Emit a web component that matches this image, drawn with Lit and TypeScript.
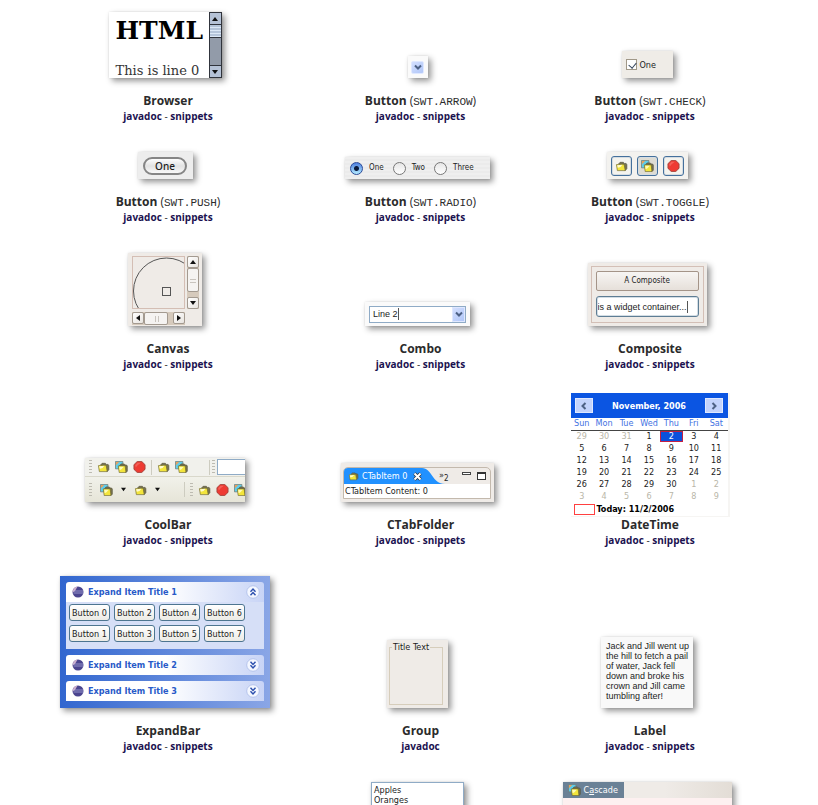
import { LitElement, html, svg, css, TemplateResult } from "lit";
import { customElement } from "lit/decorators.js";

interface Widget {
  name: string;
  style?: string;
  snippets: boolean;
  picture: TemplateResult;
  flush?: boolean;
}

const folder = svg`
  <path d="M4 4 L5.500 2.500 H9 L10 3.700 H12 L12.800 5 V9.500 L11 11.500 Z" fill="#77734e" stroke="#55533c" stroke-width=".7"/>
  <path d="M1.500 5 L9.800 4.500 L11 11.500 H2.500 Z" fill="#f3e53c" stroke="#6d6730" stroke-width=".7"/>
  <path d="M2.300 5.700 L8 5.200 L6 7.500 L3 8.500 Z" fill="#fffbd0"/>`;

const folderIcon = () => html`<svg class="icon" viewBox="0 0 14 13">${folder}</svg>`;

const imageFolderIcon = () => html`<svg class="icon" viewBox="0 0 14 13">
  <path d="M.5 .5 H8.500 V8.500 H.5 Z" fill="#5fcdea" stroke="#6f7a74" stroke-width=".8"/>
  <path d="M1 1 H4.500 L1 4.500 Z" fill="#e9a05c"/>
  <path d="M5 5 L6.500 3.200 H10 L11 4.300 H12.500 L13.300 5.500 V11 L11.800 12.500 Z" fill="#77734e" stroke="#55533c" stroke-width=".7"/>
  <path d="M3.500 5.300 H11 L11.800 12.500 H4.500 Z" fill="#f3e53c" stroke="#6d6730" stroke-width=".7"/>
  <path d="M4.500 6.200 H9.500 L7 9 L5 10 Z" fill="#fffbb8"/>
</svg>`;

const stopIcon = () => html`<svg class="icon" viewBox="0 0 14 13">
  <path d="M4.500 .6 H9.500 L13 4 V9 L9.500 12.400 H4.500 L1 9 V4 Z" fill="#ee3b33" stroke="#a3453e" stroke-width="1"/>
  <path d="M4.800 1.800 H8.500 L5 4.500 L3 7 L2.300 4.500 Z" fill="#f8857c" opacity=".5"/>
</svg>`;

const globeIcon = () => html`<svg class="globe" viewBox="0 0 12 12">
  <circle cx="6" cy="6" r="5.500" fill="#4b458f"/>
  <path d="M5.500 .6 A5.500 5.500 0 0 0 .6 6.500 L3 5 Z" fill="#cdb0cd"/>
  <path d="M1.500 5 H11 M1.500 7 H11.300" stroke="#b5b3e2" stroke-width=".7"/>
</svg>`;

const chevron = (d: string, color = "#4d6185") => html`<svg class="chev" viewBox="0 0 8 8">
  <path d=${d} fill="none" stroke=${color} stroke-width="2"/>
</svg>`;
const DOWN = "M1 2.500 L4 5.500 L7 2.500";
const LEFT = "M5.500 1 L2.500 4 L5.500 7";
const RIGHT = "M2.500 1 L5.500 4 L2.500 7";

const triangle = (points: string) => html`<svg class="tri" viewBox="0 0 6 6"><polygon points=${points} fill="#111"/></svg>`;
const T_UP = "0,5 3,1 6,5";
const T_DOWN = "0,1 6,1 3,5";
const T_LEFT = "5,0 5,6 1,3";
const T_RIGHT = "1,0 5,3 1,6";

const doubleChevron = (up: boolean) => html`<svg class="dbl" viewBox="0 0 14 14">
  <circle cx="7" cy="7" r="6.300" fill="#f4f7ff" stroke="#b5c4ec" stroke-width="1"/>
  <path d=${up ? "M4.500 6.700 L7 4 L9.500 6.700 M4.500 10.200 L7 7.500 L9.500 10.200" : "M4.500 3.800 L7 6.500 L9.500 3.800 M4.500 7.300 L7 10 L9.500 7.300"}
    fill="none" stroke="#2b4fae" stroke-width="1.400"/>
</svg>`;

const DAYS = ["Sun", "Mon", "Tue", "Wed", "Thu", "Fri", "Sat"];
const WEEKS = [0, 1, 2, 3, 4, 5].map((w) =>
  [0, 1, 2, 3, 4, 5, 6].map((d) => {
    const n = w * 7 + d - 2;
    if (n < 1) return { n: n + 31, out: true };
    return n > 30 ? { n: n - 30, out: true } : { n, out: false };
  })
);

@customElement("app-root")
export class AppRoot extends LitElement {
  static styles = css`
    :host {
      display: block;
      background: #fff;
      color: #2b2b2b;
      font: 12px/16px "Open Sans", sans-serif;
      --ui: "DejaVu Sans Condensed", "DejaVu Sans", sans-serif;
    }
    * { box-sizing: border-box; }
    button, input { font: inherit; color: inherit; padding: 0; margin: 0; }
    svg { display: block; flex: none; }
    .page {
      height: 100vh;
      overflow: hidden;
      padding: 5px 57px 0 34px;
    }
    .gallery {
      display: grid;
      grid-template-columns: 268fr 237fr 222fr;
      row-gap: 20px;
    }
    .cell {
      display: flex;
      flex-direction: column;
      justify-content: flex-end;
      align-items: center;
      min-width: 0;
    }
    .cell.top { justify-content: flex-start; }
    .picture { padding: 7px 6px 15px 0; font: 9px/10px var(--ui); color: #1c1c1c; }
    .picture.flush { padding: 0; }
    .title { height: 16px; margin: 0; font-size: 12px; line-height: 16px; font-weight: 660; white-space: nowrap; }
    .title span { font-weight: 400; }
    .title code { font: 400 11px/11px "Courier New", "Liberation Mono", monospace; }
    .links { margin: 0; padding-bottom: 2px; font-size: 10px; line-height: 14px; white-space: nowrap; }
    .links a { color: #1b1250; font-weight: 680; text-decoration: none; }
    .shot { box-shadow: 3px 3px 6px rgba(0, 0, 0, 0.42), 0 0 2px rgba(0, 0, 0, 0.1); }
    .icon { width: 13px; height: 12px; }
    .chev { width: 8px; height: 8px; }
    .tri { width: 6px; height: 6px; }
    .center { display: flex; align-items: center; justify-content: center; }
    .typed { field-sizing: content; border: 0; border-right: 1px solid #555; outline: 0; background: none; font: 9px/12px "Liberation Sans", sans-serif; }

    .browser { display: flex; width: 113px; height: 66px; background: #fff; color: #000; }
    .document { flex: 1; padding: 4px 0 0 7px; font-family: "DejaVu Serif", serif; white-space: nowrap; overflow: hidden; }
    .document b { display: block; font-size: 25px; line-height: 30px; }
    .document p { margin: 17px 0 0; font-size: 13px; line-height: 16px; color: #333; }
    .mbar { width: 13px; display: flex; flex-direction: column; background: #929ba9; border: 1px solid #30343c; }
    .mbar button { width: 11px; height: 11px; background: #b5c2d6; border: 0; }
    .mbar .thumb { height: 14px; border: solid #30343c; border-width: 1px 0; background: repeating-linear-gradient(#b5c5da 0 2px, #dce8f6 2px 3px); }
    .mbar .rest { flex: 1; border-bottom: 1px solid #30343c; }

    .arrow { width: 20px; height: 22px; background: #fafafa; }
    .blue { width: 13px; height: 13px; border: 1px solid #dfe8ff; border-radius: 2px; background: linear-gradient(135deg, #d3dffe, #b0c6f8); }

    .check { display: flex; align-items: center; gap: 3px; width: 51px; height: 27px; padding-left: 4px; background: #efece7; }
    .check input { appearance: none; width: 11px; height: 11px; border: 1px solid #a09888; background: #fff; }
    .check input::before { content: ""; display: block; width: 4px; height: 6px; margin: 1px 0 0 3px; border: solid #34465c; border-width: 0 1px 1px 0; transform: rotate(40deg); }

    .push { width: 55px; height: 27px; background: #ededed; }
    .push button { width: 44px; height: 18px; border: 2px solid #858585; border-radius: 9px; background: linear-gradient(#fdfdfd, #e2e2e2 50%, #f8f8f8); font: 500 10px/12px "Noto Sans", sans-serif; }

    .radios { display: flex; align-items: center; gap: 9px; width: 145px; height: 22px; padding-left: 5px; background: repeating-linear-gradient(#efefef 0 2px, #ebebeb 2px 4px); font-size: 8px; }
    .radios label { display: flex; align-items: center; gap: 6px; }
    .radios input { appearance: none; width: 13px; height: 13px; border: 1px solid #777; border-radius: 50%; background: linear-gradient(#e6e6e6, #fff); }
    .radios input:checked { border-color: #2b4a98; background: radial-gradient(circle at 50% 50%, #0b1a3c 0 2px, transparent 3px), linear-gradient(#4d7fe0, #b4ecff); }

    .toggles { gap: 5px; width: 81px; height: 27px; background: #f3f2ef; }
    .toggles button { width: 21px; height: 20px; border: 1px solid #44709c; border-radius: 3px; background: #f4f3ee; box-shadow: inset 0 0 0 1px #d5dce2; }
    .toggles .down { background: #dedcd3; }

    .canvas { display: grid; grid-template-columns: 53px 12px; grid-template-rows: 53px 13px; gap: 3px 2px; width: 74px; height: 73px; padding: 3px 3px 0 4px; background: #efebe7; }
    .canvas .area { border: 1px solid #d4beb4; }
    .bar { display: flex; background: #d6cabc; }
    .bar.v { flex-direction: column; }
    .bar button, .bar i { border: 1px solid #a39a90; border-radius: 2px; background: linear-gradient(135deg, #fff, #e8e4df); }
    .bar button { width: 12px; height: 12px; }
    .bar.v i { height: 24px; background: repeating-linear-gradient(transparent 0 2px, #c9c4be 2px 3px) center / 6px 7px no-repeat, #f5f3f1; }
    .bar.h i { width: 24px; background: repeating-linear-gradient(90deg, transparent 0 2px, #c9c4be 2px 3px) center / 7px 6px no-repeat, #f5f3f1; }
    .bar span { flex: 1; }

    .combo { width: 105px; height: 24px; background: #fafafa; }
    .field { display: flex; align-items: center; justify-content: space-between; width: 97px; height: 17px; padding-left: 3px; border: 1px solid #8fabc6; background: #fff; }
    .field button { height: 15px; border-radius: 0; }

    .composite { width: 119px; height: 63px; padding: 3px; background: #efebe7; }
    .composite .frame { display: flex; flex-direction: column; gap: 5px; height: 57px; padding: 4px; border: 1px solid #d3bfb6; }
    .composite button { height: 20px; border: 1px solid #a49488; border-radius: 2px; background: linear-gradient(#f7f5f3, #e6e0da); font-size: 8px; }
    .composite .box { display: flex; align-items: center; height: 21px; padding-left: 1px; border: 1px solid #5e7d94; border-radius: 3px; background: #fff; box-shadow: inset 0 0 0 1px #d3dde4; }

    .cool { width: 160px; height: 44px; overflow: hidden; background: #f1f1ec; }
    .strip { display: flex; align-items: center; height: 19px; padding-left: 4px; gap: 5px; border-bottom: 1px solid #d9d8cb; }
    .strip.low { height: 25px; gap: 8px; border: 0; background: linear-gradient(#f1f1ea, #e6e5d8); }
    .band { display: flex; align-items: center; gap: 2px; flex: none; }
    .low .band { gap: 5px; }
    .grip { width: 3px; height: 14px; background: repeating-linear-gradient(#bdbbb1 0 1px, transparent 1px 3px); flex: none; }
    .sep { width: 1px; height: 15px; background: #cdccc0; flex: none; }
    .gap { flex: none; width: 11px; }
    .low .gap { width: 8px; }
    .strip input { width: 40px; flex: none; height: 16px; border: 1px solid #8fabc6; background: #fff; }
    .strip .tri { width: 5px; height: 5px; }

    .tabs { width: 153px; height: 39px; padding: 4px 3px 3px 2px; background: #efebe7; }
    .folder { height: 32px; border: 1px solid #c3b9ad; border-radius: 5px 5px 0 0; overflow: hidden; background: #efebe7; }
    .head { display: flex; height: 16px; align-items: center; }
    .tab { display: flex; align-items: center; gap: 3px; width: 101px; height: 16px; padding-left: 4px; color: #fff; background: #2191ff; clip-path: path("M0 0 H78 C88 0 88 16 101 16 H0 Z"); white-space: nowrap; }
    .tab .icon { width: 11px; height: 10px; }
    .tab .x { width: 9px; height: 9px; margin-left: 3px; }
    .more { width: 14px; margin-left: -6px; }
    .more sub { font-size: 8px; line-height: 8px; }
    .wins { margin-left: 9px; width: 25px; height: 10px; }
    .body { height: 16px; background: #fff; line-height: 14px; padding-left: 1px; white-space: nowrap; }

    .calendar { width: 159px; height: 124px; border: solid #f6f5f3; border-width: 0 2px 1px 0; background: #fff; }
    .month { display: flex; justify-content: space-between; align-items: center; height: 25px; padding: 0 4px; background: #0b55e2; color: #fff; font-weight: 700; }
    .month button { width: 18px; height: 15px; border: 1px solid #dfe8ff; background: #c3d3fc; }
    table { width: 100%; border-collapse: collapse; table-layout: fixed; }
    th, td { height: 12px; padding: 0; text-align: center; line-height: 11px; font-weight: 400; }
    th { color: #3f72e2; border-bottom: 1px solid #444; }
    .out { color: #b9b6a8; }
    .sel { background: #0b50dc; color: #fff; box-shadow: inset 0 0 0 1px #c21f45; }
    .today { display: flex; align-items: center; gap: 2px; height: 14px; padding-left: 3px; font-weight: 700; color: #000; }
    .today i { width: 21px; height: 11px; border: 1px solid #ff4040; }

    .expand { display: flex; flex-direction: column; gap: 6px; width: 210px; height: 132px; padding: 6px; background: linear-gradient(90deg, #3166cf, #8aa6e6); }
    .exphead { display: flex; width: 198px; align-items: center; gap: 4px; height: 20px; padding: 0 4px 0 6px; border: 0; border-radius: 3px 3px 0 0; background: linear-gradient(90deg, #fff 50%, #c8d4f6); color: #285ac8; font-weight: 700; text-align: left; }
    .exphead span { flex: 1; }
    .globe { width: 12px; height: 12px; }
    .dbl { width: 14px; height: 14px; }
    .expbody { display: grid; grid-template-columns: repeat(4, 41px); grid-auto-rows: 17px; gap: 4px; height: 47px; padding: 2px 3px; background: #d6dff7; }
    .expbody button { border: 1px solid #4d7590; border-radius: 3px; background: linear-gradient(#fff, #ecebe5); white-space: nowrap; }

    .group { width: 61px; height: 68px; padding: 2px 5px 3px 2px; background: #efebe7; }
    fieldset { height: 63px; margin: 0; padding: 0; border: 1px solid #d6cdbb; min-width: 0; }
    legend { margin-left: 2px; padding: 0 1px; white-space: nowrap; }

    .text { width: 92px; height: 71px; padding: 4px 5px; background: #f9f9f9; font-family: "Liberation Sans", sans-serif; white-space: pre; }

    .list { width: 93px; height: 60px; margin: 0; padding: 2px; border: 1px solid #8fabc6; background: #fff; list-style: none; }
    .menu { width: 169px; height: 60px; background: #fdf0f0; }
    .menubar { height: 16px; background: linear-gradient(90deg, #efebe7 60%, #e3ddd6); }
    .menubar button { display: flex; align-items: center; gap: 3px; width: 61px; height: 16px; padding-left: 5px; border: 0; background: #6a8196; color: #fff; }
  `;

  private widgets: Widget[] = [
    {
      name: "Browser", snippets: true,
      picture: html`<div class="shot browser">
        <div class="document"><b>HTML</b><p>This is line 0</p></div>
        <div class="mbar">
          <button class="center" aria-label="Up">${triangle(T_UP)}</button>
          <div class="thumb"></div><div class="rest"></div>
          <button class="center" aria-label="Down">${triangle(T_DOWN)}</button>
        </div>
      </div>`,
    },
    {
      name: "Button", style: "SWT.ARROW", snippets: true,
      picture: html`<div class="shot arrow center"><button class="blue center" aria-label="Open">${chevron(DOWN)}</button></div>`,
    },
    {
      name: "Button", style: "SWT.CHECK", snippets: true,
      picture: html`<label class="shot check"><input type="checkbox" checked />One</label>`,
    },
    {
      name: "Button", style: "SWT.PUSH", snippets: true,
      picture: html`<div class="shot push center"><button>One</button></div>`,
    },
    {
      name: "Button", style: "SWT.RADIO", snippets: true,
      picture: html`<div class="shot radios">
        ${["One", "Two", "Three"].map((t, i) => html`<label><input type="radio" name="count" ?checked=${i === 0} />${t}</label>`)}
      </div>`,
    },
    {
      name: "Button", style: "SWT.TOGGLE", snippets: true,
      picture: html`<div class="shot toggles center">
        <button class="center" aria-label="Folder">${folderIcon()}</button>
        <button class="center down" aria-label="Images" aria-pressed="true">${imageFolderIcon()}</button>
        <button class="center" aria-label="Stop">${stopIcon()}</button>
      </div>`,
    },
    {
      name: "Canvas", snippets: true,
      picture: html`<div class="shot canvas">
        <svg class="area" viewBox="0 0 51 51">
          <circle cx="33.500" cy="34" r="33" fill="none" stroke="#555"/>
          <rect x="29.500" y="30.500" width="8" height="8" fill="none" stroke="#555"/>
        </svg>
        <div class="bar v">
          <button class="center" aria-label="Up">${triangle(T_UP)}</button><i></i><span></span>
          <button class="center" aria-label="Down">${triangle(T_DOWN)}</button>
        </div>
        <div class="bar h">
          <button class="center" aria-label="Left">${triangle(T_LEFT)}</button><i></i><span></span>
          <button class="center" aria-label="Right">${triangle(T_RIGHT)}</button>
        </div>
      </div>`,
    },
    {
      name: "Combo", snippets: true,
      picture: html`<div class="shot combo center"><div class="field">
        <input class="typed" type="text" aria-label="Line" .value=${"Line 2"} />
        <button class="blue center" aria-label="Open">${chevron(DOWN)}</button>
      </div></div>`,
    },
    {
      name: "Composite", snippets: true,
      picture: html`<div class="shot composite"><div class="frame">
        <button>A Composite</button>
        <div class="box"><input class="typed" type="text" aria-label="Text" .value=${"is a widget container..."} /></div>
      </div></div>`,
    },
    {
      name: "CoolBar", snippets: true,
      picture: html`<div class="shot cool">
        <div class="strip">
          <div class="grip"></div>${folderIcon()}${imageFolderIcon()}${stopIcon()}
          <div class="sep"></div>${folderIcon()}${imageFolderIcon()}
          <div class="gap"></div>
          <div class="band"><div class="sep"></div><div class="grip"></div>
          <input type="text" aria-label="Search" /></div>
        </div>
        <div class="strip low">
          <div class="grip"></div>${imageFolderIcon()}${triangle(T_DOWN)}
          ${folderIcon()}${triangle(T_DOWN)}<div class="gap"></div>
          <div class="band"><div class="sep"></div><div class="grip"></div>
          ${folderIcon()}${stopIcon()}${imageFolderIcon()}</div>
        </div>
      </div>`,
    },
    {
      name: "CTabFolder", snippets: true,
      picture: html`<div class="shot tabs"><div class="folder">
        <div class="head">
          <div class="tab">${folderIcon()}<span>CTabItem 0</span>
            <svg class="x" viewBox="0 0 9 9"><path d="M1.500 1.500 L7.500 7.500 M7.500 1.500 L1.500 7.500" stroke="#333" stroke-width="3.400"/><path d="M1.500 1.500 L7.500 7.500 M7.500 1.500 L1.500 7.500" stroke="#fff" stroke-width="2"/></svg>
          </div>
          <span class="more">»<sub>2</sub></span>
          <svg class="wins" viewBox="0 0 25 10">
            <rect x=".5" y="1.500" width="8" height="2" fill="#fff" stroke="#444"/>
            <rect x="15.500" y="1.500" width="8" height="7" fill="#fff" stroke="#333"/><path d="M15 2 H24" stroke="#333" stroke-width="2"/>
          </svg>
        </div>
        <div class="body">CTabItem Content: 0</div>
      </div></div>`,
    },
    {
      name: "DateTime", snippets: true, flush: true,
      picture: html`<div class="calendar">
        <div class="month">
          <button class="center" aria-label="Previous month">${chevron(LEFT)}</button>
          <span>November, 2006</span>
          <button class="center" aria-label="Next month">${chevron(RIGHT)}</button>
        </div>
        <table>
          <thead><tr>${DAYS.map((d) => html`<th>${d}</th>`)}</tr></thead>
          <tbody>${WEEKS.map((w) => html`<tr>${w.map((d) => html`<td class=${d.out ? "out" : d.n === 2 ? "sel" : ""}>${d.n}</td>`)}</tr>`)}</tbody>
        </table>
        <div class="today"><i></i>Today: 11/2/2006</div>
      </div>`,
    },
    {
      name: "ExpandBar", snippets: true,
      picture: html`<div class="shot expand">
        <div>
          <button class="exphead">${globeIcon()}<span>Expand Item Title 1</span>${doubleChevron(true)}</button>
          <div class="expbody">${[0, 2, 4, 6, 1, 3, 5, 7].map((n) => html`<button>Button ${n}</button>`)}</div>
        </div>
        ${[2, 3].map((n) => html`<button class="exphead">${globeIcon()}<span>Expand Item Title ${n}</span>${doubleChevron(false)}</button>`)}
      </div>`,
    },
    {
      name: "Group", snippets: false,
      picture: html`<div class="shot group"><fieldset><legend>Title Text</legend></fieldset></div>`,
    },
    {
      name: "Label", snippets: true,
      picture: html`<div class="shot text">${["Jack and Jill went up", "the hill to fetch a pail", "of water, Jack fell", "down and broke his", "crown and Jill came", "tumbling after!"].join("\n")}</div>`,
    },
  ];

  private cell(w: Widget) {
    return html`<section class="cell">
      <div class=${w.flush ? "picture flush" : "picture"}>${w.picture}</div>
      <h3 class="title">${w.name}${w.style ? html` <span>(<code>${w.style}</code>)</span>` : ""}</h3>
      <p class="links"><a href="#javadoc">javadoc</a>${w.snippets ? html` - <a href="#snippets">snippets</a>` : ""}</p>
    </section>`;
  }

  render() {
    return html`<main class="page"><div class="gallery">
      ${this.widgets.map((w) => this.cell(w))}
      <section class="cell top"></section>
      <section class="cell top"><div class="picture"><ul class="shot list"><li>Apples</li><li>Oranges</li></ul></div></section>
      <section class="cell top"><div class="picture"><div class="shot menu">
        <div class="menubar"><button>${imageFolderIcon()}<span>C<u>a</u>scade</span></button></div>
      </div></div></section>
    </div></main>`;
  }
}
